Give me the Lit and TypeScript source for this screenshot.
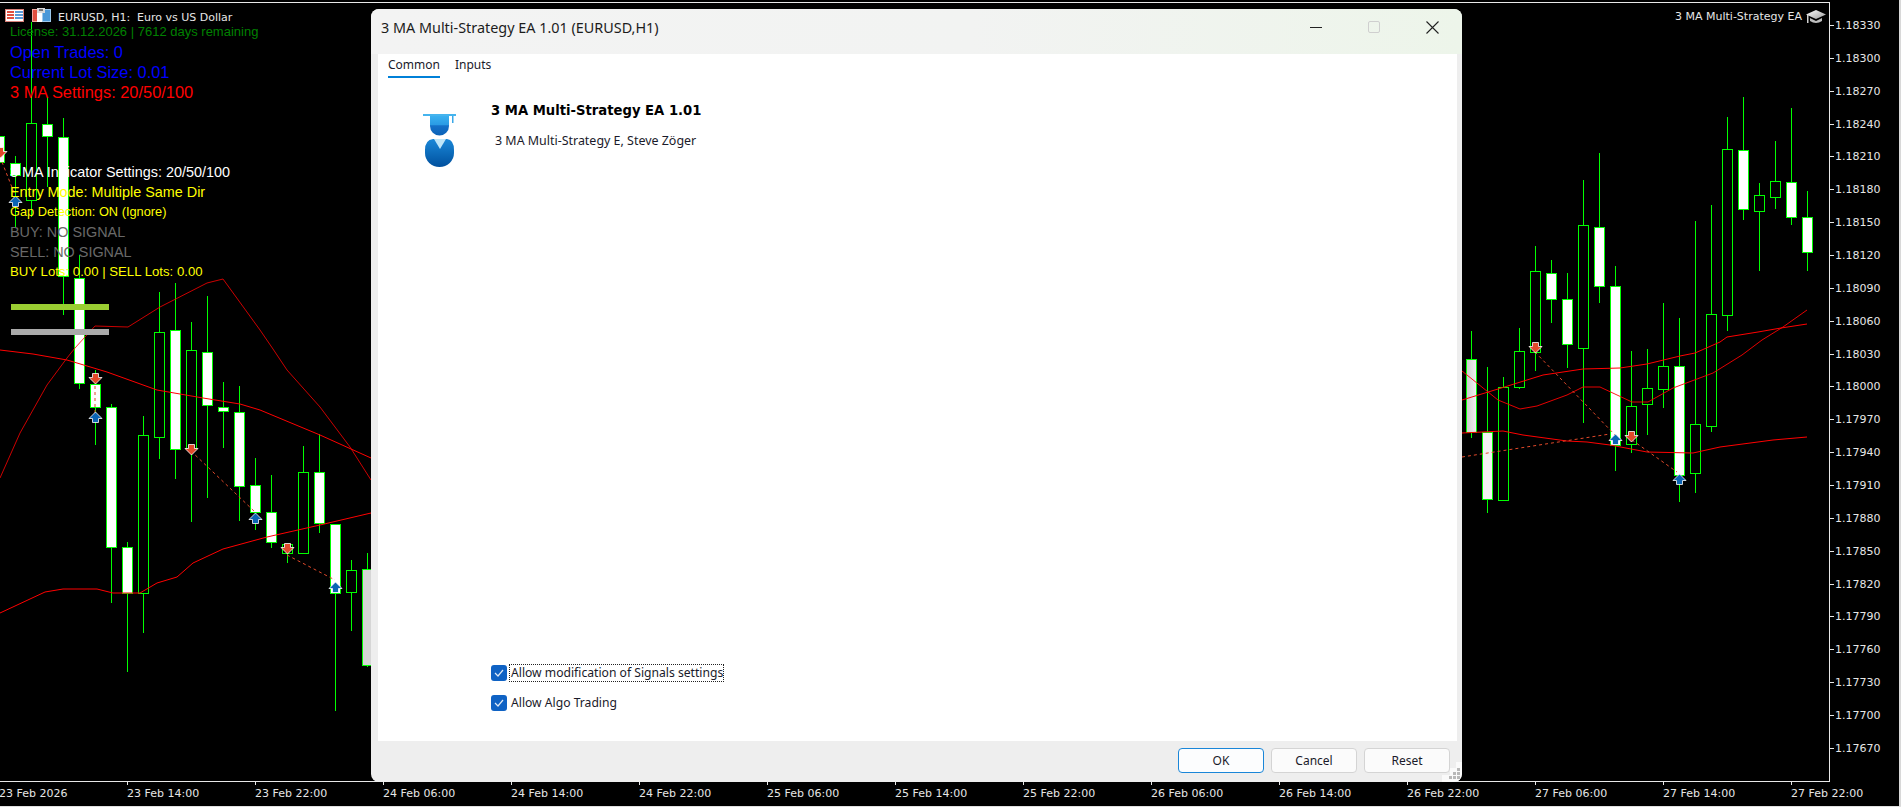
import { LitElement, html, css, svg } from "lit";
import { customElement } from "lit/decorators.js";

// x, wickTop, wickBottom, bodyTop, bodyBottom, fill
type C = [number, number, number, number, number, string];
const W = "#fff", K = "#000";
const candles: C[] = [
  [-1, 120, 170, 136, 162, W],
  [15, 156, 227, 163, 175, W],
  [31, 22, 217, 123, 200, K],
  [47, 97, 187, 124, 136, W],
  [63, 118, 315, 137, 276, W],
  [79, 255, 389, 278, 383, W],
  [95, 370, 445, 384, 407, W],
  [111, 404, 603, 407, 547, W],
  [127, 542, 672, 547, 593, W],
  [143, 416, 633, 435, 593, K],
  [159, 292, 459, 332, 437, K],
  [175, 283, 479, 330, 449, W],
  [191, 322, 522, 350, 448, K],
  [207, 296, 498, 352, 405, W],
  [223, 382, 448, 407, 411, W],
  [239, 386, 521, 412, 486, W],
  [255, 458, 530, 485, 512, W],
  [271, 475, 548, 512, 542, W],
  [287, 544, 563, 544, 553, K],
  [303, 446, 553, 472, 553, K],
  [319, 434, 533, 472, 523, W],
  [335, 524, 711, 524, 593, W],
  [351, 560, 631, 570, 592, K],
  [367, 553, 667, 569, 665, "#d6d6d6"],
  [1471, 331, 438, 359, 432, "url(#fade)"],
  [1487, 367, 513, 432, 499, "#f2f2f2"],
  [1503, 377, 500, 387, 500, K],
  [1519, 328, 389, 351, 387, K],
  [1535, 246, 371, 271, 352, K],
  [1551, 260, 323, 273, 299, W],
  [1567, 273, 368, 299, 344, W],
  [1583, 180, 423, 225, 348, K],
  [1599, 153, 303, 227, 286, W],
  [1615, 266, 471, 286, 445, W],
  [1631, 351, 453, 406, 444, K],
  [1647, 349, 435, 388, 404, K],
  [1663, 303, 408, 366, 389, K],
  [1679, 318, 502, 366, 475, W],
  [1695, 221, 493, 424, 473, K],
  [1711, 205, 432, 314, 426, K],
  [1727, 117, 331, 149, 315, K],
  [1743, 97, 220, 150, 209, W],
  [1759, 183, 271, 195, 211, K],
  [1775, 141, 209, 181, 197, K],
  [1791, 108, 225, 182, 217, W],
  [1807, 191, 271, 217, 252, W],
];

const maLines: [string, number][] = [
  ["0,478 20,433 47,385 67,358 75,348 95,326 128,327 160,307 207,283 223,279 260,330 273,349 287,370 320,407 350,447 371,480", 0.8],
  ["0,350 33,354 67,360 107,372 157,390 203,398 240,404 260,410 320,435 371,458", 1],
  ["0,613 45,592 63,589 97,589 113,593 140,593 157,583 177,577 193,563 223,549 267,537 320,525 371,513", 1],
  ["1462,371 1498,400 1520,409 1537,406 1567,395 1583,387 1600,387 1632,402 1648,402 1673,388 1713,373 1742,355 1762,340 1783,327 1807,310", 0.9],
  ["1462,400 1498,389 1543,375 1583,369 1620,368 1647,364 1680,356 1695,353 1720,342 1727,337 1758,332 1781,328 1807,324", 1],
  ["1462,433 1503,431 1523,435 1567,441 1587,442 1610,445 1647,452 1693,453 1720,447 1773,440 1807,437", 1],
];

const tradeLines = [
  [2, 162, 15, 195],
  [95, 380, 95, 416],
  [191, 451, 255, 512],
  [287, 555, 335, 580],
  [1535, 352, 1615, 435],
  [1632, 440, 1677, 472],
  [1462, 457, 1610, 434],
];

const downArrows = [[0, 152], [95, 378], [191, 449], [287, 548], [1535, 347], [1631, 436]];
const upArrows = [[15, 202], [95, 418], [255, 519], [335, 588], [1615, 440], [1679, 480]];

const prices = ["1.18330","1.18300","1.18270","1.18240","1.18210","1.18180","1.18150","1.18120","1.18090","1.18060","1.18030","1.18000","1.17970","1.17940","1.17910","1.17880","1.17850","1.17820","1.17790","1.17760","1.17730","1.17700","1.17670"];
const times = ["23 Feb 14:00","23 Feb 22:00","24 Feb 06:00","24 Feb 14:00","24 Feb 22:00","25 Feb 06:00","25 Feb 14:00","25 Feb 22:00","26 Feb 06:00","26 Feb 14:00","26 Feb 22:00","27 Feb 06:00","27 Feb 14:00","27 Feb 22:00"];

type L = [string, number, string, string];
const overlay: L[] = [
  ["License: 31.12.2026 | 7612 days remaining", 36, "t13", "#008000"],
  ["Open Trades: 0", 58, "t16", "#0000ff"],
  ["Current Lot Size: 0.01", 78, "t16", "#0000ff"],
  ["3 MA Settings: 20/50/100", 98, "t16", "#ff0000"],
  ["3 MA Indicator Settings: 20/50/100", 177, "t14", "#ffffff"],
  ["Entry Mode: Multiple Same Dir", 197, "t14", "#ffff00"],
  ["Gap Detection: ON (Ignore)", 216, "t12", "#ffff00"],
  ["BUY: NO SIGNAL", 237, "t14", "#696969"],
  ["SELL: NO SIGNAL", 257, "t14", "#696969"],
  ["BUY Lots: 0.00 | SELL Lots: 0.00", 276, "t13b", "#ffff00"],
];

@customElement("app-root")
export class AppRoot extends LitElement {
  static styles = css`
    :host { display: block; width: 1901px; height: 807px; position: relative; background: #000; overflow: hidden; }
    .chart { position: absolute; inset: 0; width: 1901px; height: 807px; display: block; }
    .axis { font: 11px "DejaVu Sans", sans-serif; fill: #e6e6e6; }
    .t12 { font: 12.8px "Liberation Sans", sans-serif; }
    .t13 { font: 13px "Liberation Sans", sans-serif; }
    .t13b { font: 13.2px "Liberation Sans", sans-serif; }
    .t14 { font: 14.4px "Liberation Sans", sans-serif; }
    .t16 { font: 16.4px "Liberation Sans", sans-serif; }
    .dialog {
      position: absolute; left: 371px; top: 9px; width: 1091px; height: 773px;
      background: #eeeeee; border-radius: 8px; display: flex; flex-direction: column; overflow: hidden;
      font-family: "Noto Sans", sans-serif; color: #111;
    }
    .titlebar {
      height: 45px; flex: none; display: flex; align-items: flex-start; padding-left: 10px;
      background: linear-gradient(90deg, #f3f3f3 0%, #f2f3f2 55%, #edf5ea 100%);
      font-size: 14.4px; color: #1c1c1c;
    }
    .title { flex: 1; line-height: 38px; }
    .winbtn { width: 58px; height: 36px; display: flex; align-items: center; justify-content: center; }
    .winbtn.close { margin-right: 1px; }
    .winbtn svg { display: block; }
    .page { flex: 1; margin: 0 5px 0 7px; background: #fff; display: flex; flex-direction: column; min-height: 0; }
    .tabs { display: flex; gap: 15px; padding-left: 10px; height: 24px; flex: none; font-size: 12px; }
    .tab { height: 22px; line-height: 21px; color: #1a1a2a; }
    .tab.on { border-bottom: 2px solid #0080d8; }
    .info { display: flex; padding: 26px 0 0 45px; flex: 1; }
    .logo { width: 34px; height: 56px; flex: none; margin: 9px 34px 0 0; display: block; }
    .head { display: flex; flex-direction: column; }
    .name { font: bold 13.2px "DejaVu Sans", sans-serif; color: #000; line-height: 16px; margin-top: -1px; }
    .sub { font-size: 12.45px; line-height: 16px; margin: 14px 0 0 4px; color: #1a1a2a; }
    .checks { display: flex; flex-direction: column; gap: 13px; padding: 0 0 30px 113px; flex: none; }
    .check { display: flex; align-items: center; gap: 2px; height: 17px; font-size: 12.15px; color: #1a1a2a; }
    .box { width: 16px; height: 16px; border-radius: 3px; background: #0f62c4; display: flex; align-items: center; justify-content: center; flex: none; }
    .lbl { line-height: 16px; padding: 0 0 0 1px; white-space: nowrap; border: 1px solid transparent; }
    .lbl.focus { border: 1px dotted #222; }
    .footer { height: 41px; flex: none; display: flex; justify-content: flex-end; gap: 7px; padding: 7px 12px 0 0; box-sizing: border-box; position: relative; }
    .btn { width: 86px; height: 25px; box-sizing: border-box; border: 1px solid #d4d4d4; border-radius: 4px; background: #fbfbfb;
      font-size: 12px; display: flex; align-items: center; justify-content: center; color: #1a1a2a; }
    .btn.def { border: 1px solid #1a86d8; background: #fcfdfe; }
    .grip { position: absolute; right: 0; bottom: 0; width: 20px; height: 20px; display: block; }
  `;

  private arrow(x: number, y: number, up: boolean) {
    const pts = up
      ? `${x},${y - 6} ${x + 6.5},${y + 0.5} ${x + 3},${y + 0.5} ${x + 3},${y + 4.5} ${x - 3},${y + 4.5} ${x - 3},${y + 0.5} ${x - 6.5},${y + 0.5}`
      : `${x},${y + 6} ${x + 6.5},${y - 0.5} ${x + 3},${y - 0.5} ${x + 3},${y - 4.5} ${x - 3},${y - 4.5} ${x - 3},${y - 0.5} ${x - 6.5},${y - 0.5}`;
    return svg`<polygon points=${pts} fill=${up ? "#0b64b4" : "#e2492a"} stroke="#fff" stroke-width="0.8"/>`;
  }

  private chart() {
    return html`<svg class="chart" viewBox="0 0 1901 807">
      <defs>
        <linearGradient id="fade" x1="0" x2="1" y1="0" y2="0"><stop offset="0" stop-color="#cfcfcf"/><stop offset="1" stop-color="#f0f0f0"/></linearGradient>
        <linearGradient id="cap" x1="0" x2="1" y1="0" y2="1"><stop offset="0" stop-color="#ffffff"/><stop offset="1" stop-color="#9a9a9a"/></linearGradient>
      </defs>
      <g shape-rendering="crispEdges">
        <rect x="0" y="2" width="1830" height="1" fill="#e8e8e8"/>
        <rect x="1829" y="2" width="1" height="780" fill="#e8e8e8"/>
        <rect x="0" y="781" width="1830" height="1" fill="#e8e8e8"/>
        <rect x="1899" y="0" width="2" height="807" fill="#d8d8d8"/>
        <rect x="0" y="806" width="1901" height="1" fill="#e0e0e0"/>
        ${prices.map((_, i) => svg`<rect x="1830" y=${Math.round(25 + i * 32.86)} width="4" height="1" fill="#e8e8e8"/>`)}
        ${times.map((_, i) => svg`<rect x=${127 + i * 128} y="782" width="1" height="3" fill="#e8e8e8"/>`)}
        ${candles.map(([x, wt, wb, bt, bb, f]) => svg`
          <line x1=${x + 0.5} x2=${x + 0.5} y1=${wt} y2=${wb} stroke="#00ff00"/>
          <rect x=${x - 4.5} y=${bt + 0.5} width="10" height=${bb - bt} fill=${f} stroke="#00ff00"/>
        `)}
      </g>
      ${maLines.map(([p, w]) => svg`<polyline points=${p} fill="none" stroke="#ff0000" stroke-width=${w}/>`)}
      ${tradeLines.map(([a, b, c, d]) => svg`<line x1=${a} y1=${b} x2=${c} y2=${d} stroke="#e2492a" stroke-dasharray="3 3"/>`)}
      ${downArrows.map(([x, y]) => this.arrow(x + 0.5, y, false))}
      ${upArrows.map(([x, y]) => this.arrow(x + 0.5, y, true))}
      ${overlay.map(([t, y, c, f]) => svg`<text x="10" y=${y} class=${c} fill=${f}>${t}</text>`)}
      <rect x="11" y="304" width="98" height="6" fill="#9acd32"/>
      <rect x="11" y="329" width="98" height="6" fill="#aaaaaa"/>

      <!-- chart window icons -->
      <g shape-rendering="crispEdges">
        <rect x="5.5" y="9.5" width="18" height="12" fill="#fff" stroke="#d88078"/>
        <rect x="7" y="11" width="7" height="2" fill="#e05040"/><rect x="7" y="14" width="7" height="2" fill="#e05040"/><rect x="7" y="17" width="7" height="2" fill="#e05040"/>
        <rect x="15" y="11" width="8" height="2" fill="#5a9ad8"/><rect x="15" y="14" width="8" height="2" fill="#5a9ad8"/><rect x="15" y="17" width="8" height="2" fill="#5a9ad8"/>
        <rect x="32.5" y="9.5" width="8" height="12" fill="#e05040" stroke="#f0a8a0"/>
        <rect x="42.5" y="9.5" width="8" height="12" fill="#4a98d8" stroke="#9cc8ec"/>
        <rect x="37" y="8" width="8" height="5" fill="#d8d8d8"/>
        <rect x="39" y="9" width="4" height="2" fill="#707070"/>
        <rect x="37" y="13" width="5" height="9" fill="#fff"/>
      </g>
      <text x="58" y="21" class="axis">EURUSD, H1:\u00a0 Euro vs US Dollar</text>

      <text x="1675" y="20" class="axis">3 MA Multi-Strategy EA</text>
      <path d="M1816 10 L1826 14.5 L1816 19 L1806 14.5 Z" fill="url(#cap)"/>
      <path d="M1810 18 L1816 21 L1822 18 L1822 21 Q1816 25 1810 21 Z" fill="#bdbdbd"/>
      <rect x="1807" y="15" width="1.5" height="8" fill="#cfcfcf"/>

      ${prices.map((p, i) => svg`<text x="1835" y=${Math.round(29 + i * 32.86)} class="axis">${p}</text>`)}
      <text x="-1" y="797" class="axis">23 Feb 2026</text>
      ${times.map((t, i) => svg`<text x=${127 + i * 128} y="797" class="axis">${t}</text>`)}
    </svg>`;
  }

  private dialog() {
    const tick = html`<svg width="10" height="8" viewBox="0 0 10 8"><path d="M1 4 L4 7 L9 1" fill="none" stroke="#dfe9f5" stroke-width="1.2"/></svg>`;
    return html`<div class="dialog">
      <div class="titlebar">
        <div class="title">3 MA Multi-Strategy EA 1.01 (EURUSD,H1)</div>
        <div class="winbtn"><svg width="12" height="12"><rect x="0" y="6" width="12" height="1" fill="#222"/></svg></div>
        <div class="winbtn"><svg width="12" height="12"><rect x="0.5" y="0.5" width="11" height="11" rx="1.5" fill="none" stroke="#cfcfcf"/></svg></div>
        <div class="winbtn close"><svg width="13" height="13"><path d="M0.5 0.5 L12.5 12.5 M12.5 0.5 L0.5 12.5" stroke="#222" stroke-width="1.1"/></svg></div>
      </div>
      <div class="page">
        <div class="tabs"><div class="tab on">Common</div><div class="tab">Inputs</div></div>
        <div class="info">
          <svg class="logo" viewBox="0 0 34 56">
            <defs>
              <linearGradient id="h" x1="0" x2="0" y1="0" y2="1"><stop offset="0" stop-color="#3ab0f0"/><stop offset="0.45" stop-color="#2a9be4"/><stop offset="0.5" stop-color="#1570c8"/><stop offset="1" stop-color="#0a62b8"/></linearGradient>
              <linearGradient id="b" x1="0" x2="0" y1="0" y2="1"><stop offset="0" stop-color="#1a88d8"/><stop offset="1" stop-color="#00509e"/></linearGradient>
            </defs>
            <rect x="0" y="1" width="33" height="2" fill="#45b4ee"/>
            <rect x="29" y="3" width="1.5" height="7" fill="#3aa8e8"/>
            <path d="M7 3 H26 V13 A9.5 9.5 0 0 1 7 13 Z" fill="url(#h)"/>
            <path d="M2 37 Q2 27 10 26 L24 26 Q31 27 31 37 V40 A14.5 14 0 0 1 2 40 Z" fill="url(#b)"/>
            <path d="M11 26 H23 L17 36 Z" fill="#bfe6f8"/>
          </svg>
          <div class="head">
            <div class="name">3 MA Multi-Strategy EA 1.01</div>
            <div class="sub">3 MA Multi-Strategy E, Steve Zöger</div>
          </div>
        </div>
        <div class="checks">
          <div class="check"><span class="box">${tick}</span><span class="lbl focus">Allow modification of Signals settings</span></div>
          <div class="check"><span class="box">${tick}</span><span class="lbl">Allow Algo Trading</span></div>
        </div>
      </div>
      <div class="footer">
        <div class="btn def">OK</div><div class="btn">Cancel</div><div class="btn">Reset</div>
        <svg class="grip" viewBox="0 0 20 20"><path d="M20 0 V12 Q20 20 12 20 H0 V13 H8 V6 H14 V0 Z" fill="#fafafa"/>
          <g fill="#b8b8b8"><rect x="15" y="6" width="3" height="3"/><rect x="11" y="10" width="3" height="3"/><rect x="15" y="10" width="3" height="3"/><rect x="7" y="14" width="3" height="3"/><rect x="11" y="14" width="3" height="3"/><rect x="15" y="14" width="3" height="3"/></g>
        </svg>
      </div>
    </div>`;
  }

  render() {
    return html`${this.chart()}${this.dialog()}`;
  }
}
